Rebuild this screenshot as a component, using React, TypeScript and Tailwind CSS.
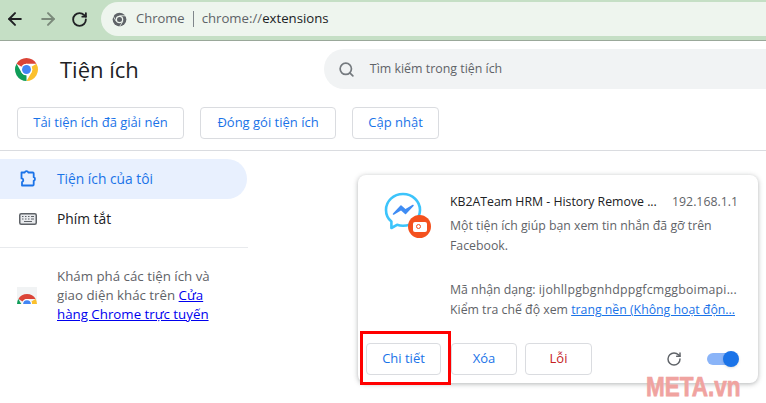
import React from 'react';
import { ArrowLeft, ArrowRight, RotateCw, Search } from 'lucide-react';

const ChromeLogo = ({ size }: { size: number }) => (
  <svg width={size} height={size} viewBox="2 2 44 44">
    <path d="M4.950 13A22 22 0 0 1 43.050 13H24A11 11 0 0 0 14.470 18.500z" fill="#db4437" />
    <path d="M43.050 13A22 22 0 0 1 24 46L33.530 29.500A11 11 0 0 0 33.530 18.500z" fill="#fbc02d" />
    <path d="M24 46A22 22 0 0 1 4.950 13L14.470 29.500A11 11 0 0 0 24 35z" fill="#0f9d58" />
    <circle cx="24" cy="24" r="11" fill="#fff" />
    <circle cx="24" cy="24" r="8.500" fill="#4285f4" />
  </svg>
);

const GrayChrome = () => (
  <svg width="15" height="15" viewBox="0 0 24 24" fill="none">
    <circle cx="12" cy="12" r="11" fill="#5f6368" />
    <circle cx="12" cy="12" r="6" fill="#eef5ee" />
    <circle cx="12" cy="12" r="4" fill="#5f6368" />
    <path d="M12 6h10.500M6.800 15 1.800 6.500M17.200 15 12 23.500" stroke="#eef5ee" strokeWidth="1.300" />
  </svg>
);

const PuzzleIcon = () => (
  <svg width="18" height="18" viewBox="0 0 18 18" fill="none" stroke="#1a73e8" strokeWidth="1.800" strokeLinejoin="round">
    <path d="M2.500 2.500h3.200a1.900 1.900 0 0 1 3.600 0h4.400a1 1 0 0 1 1 1v3.700a1.900 1.900 0 0 1 0 3.600v3.700a1 1 0 0 1-1 1H3v-3.500a1.900 1.900 0 0 0 0-3.600H2.500z" />
  </svg>
);

const KeyboardIcon = () => (
  <svg width="18" height="12" viewBox="0 0 18 12">
    <rect x="0.750" y="0.750" width="16.500" height="10.500" rx="1.500" fill="#e8eaed" stroke="#5f6368" strokeWidth="1.500" />
    <path d="M3 3.500h1.500M6 3.500h1.500M9 3.500h1.500M12 3.500h3M3 6h1.500M6 6h1.500M9 6h1.500M12 6h3M5 8.500h8" stroke="#5f6368" />
  </svg>
);

const StoreIcon = () => (
  <div className="w-5 h-[17px] bg-[#f1f3f4] flex justify-center items-end">
    <div className="w-5 h-[10px] overflow-hidden">
      <ChromeLogo size={20} />
    </div>
  </div>
);

const ExtensionIcon = () => (
  <div className="relative w-[47px] h-[46px]">
    <svg width="38" height="38" viewBox="0 0 38 38" fill="none">
      <path
        d="M19 2C9.500 2 2 9 2 18c0 4.700 2 8.800 5.400 11.600V36l5.600-3.200c1.900.6 3.900.9 6 .9 9.500 0 17-7 17-15.700S28.500 2 19 2z"
        stroke="#3cc4fb"
        strokeWidth="2.600"
        strokeLinejoin="round"
      />
      <path d="M9.500 22l7.500-8 4.500 4 7.500-4.500-7.500 8-4.500-4z" fill="#3f8cf4" stroke="#3f8cf4" strokeWidth="1.500" strokeLinejoin="round" />
    </svg>
    <div className="absolute right-0 bottom-0 w-[23px] h-[23px] rounded-full bg-[#f4511e] flex items-center justify-center">
      <div className="w-[14px] h-[10px] rounded-[2px] bg-white flex items-center pl-[3px]">
        <div className="w-[5px] h-[5px] rounded-full border border-[#f4511e]" />
      </div>
    </div>
  </div>
);

const OutlineButton = ({ label, className, red }: { label: string; className: string; red?: boolean }) => (
  <button
    className={`h-8 rounded border border-[#dadce0] bg-white text-[13px] font-medium flex items-center justify-center ${
      red ? 'text-[#c5221f]' : 'text-[#1a73e8]'
    } ${className}`}
  >
    {label}
  </button>
);

export default function App() {
  return (
    <div
      className="relative w-[766px] h-[403px] overflow-hidden bg-white text-[#202124]"
      style={{ fontFamily: '"Open Sans", "Noto Sans", sans-serif' }}
    >
      {/* Browser toolbar */}
      <div className="h-[41px] bg-[#c5dfc5] border-b border-[#9aa89a] flex items-start pt-[2px]">
        <div className="w-[101px] h-[34px] flex items-center pl-[5px] gap-[13px] shrink-0">
          <ArrowLeft size={20} color="#202124" strokeWidth={2.400} />
          <ArrowRight size={20} color="#7b8a7b" strokeWidth={2.400} />
          <RotateCw size={17} color="#202124" strokeWidth={2.600} />
        </div>
        <div className="flex-1 h-[34px] -mr-5 bg-[#eef5ee] rounded-full flex items-center pl-[11px]">
          <GrayChrome />
          <span className="ml-[9px] text-[13px] text-[#5f6368]">Chrome</span>
          <span className="mx-[8px] w-px h-4 bg-[#80868b]" />
          <span className="text-[13.200px] text-[#5f6368]">
            chrome://<span className="text-[#202124]">extensions</span>
          </span>
        </div>
      </div>

      {/* Header */}
      <div className="h-10 mt-2 flex items-center pl-[15px]">
        <ChromeLogo size={23} />
        <h1 className="ml-[22px] text-[22px] font-normal">Tiện ích</h1>
        <div className="ml-[185px] flex-1 h-10 -mr-5 bg-[#f1f3f4] rounded-full flex items-center pl-[14px]">
          <Search size={17} color="#757a7f" strokeWidth={2.400} />
          <span className="ml-[15px] text-[12.400px] text-[#5f6368]">Tìm kiếm trong tiện ích</span>
        </div>
      </div>

      <div className="flex gap-4 pl-[17px] mt-[18px] h-[33px] pb-px">
        <OutlineButton label="Tải tiện ích đã giải nén" className="w-[167px]" />
        <OutlineButton label="Đóng gói tiện ích" className="w-[136px]" />
        <OutlineButton label="Cập nhật" className="w-[87px]" />
      </div>

      <div className="h-px bg-[#dadce0] mt-[10px]" />

      <div className="flex">
        {/* Sidebar */}
        <aside className="w-[248px] shrink-0 pt-2">
          <div className="h-10 w-[247px] bg-[#e8f0fe] rounded-r-full flex items-center pl-[19px] gap-5 text-[13.800px] font-medium text-[#1a73e8]">
            <PuzzleIcon />
            <span>Tiện ích của tôi</span>
          </div>
          <div className="h-10 flex items-center pl-[19px] gap-5 text-[13.800px] font-medium">
            <KeyboardIcon />
            <span>Phím tắt</span>
          </div>
          <div className="h-px bg-[#e8eaed] mt-2" />
          <div className="flex items-center pl-[17px] gap-5 pt-[19px] text-[13.300px] leading-[19px] text-[#5f6368]">
            <StoreIcon />
            <p className="w-[172px]">
              Khám phá các tiện ích và giao diện khác trên{' '}
              <a className="text-[#0000ee] underline">Cửa hàng Chrome trực tuyến</a>
            </p>
          </div>
        </aside>

        {/* Extension card */}
        <main className="pl-[110px] pt-6">
          <div className="w-[400px] h-[208px] rounded-lg bg-white shadow-[0_1px_5px_rgba(60,64,67,0.4)] flex flex-col">
            <div className="flex-1 flex pl-[26px] pr-5 pt-[17px]">
              <ExtensionIcon />
              <div className="ml-[19px] w-[288px] text-[12.300px] text-[#5f6368] whitespace-nowrap">
                <div className="flex justify-between leading-5">
                  <span className="text-[#202124]">KB2ATeam HRM - History Remove ...</span>
                  <span>192.168.1.1</span>
                </div>
                <p className="mt-1 leading-5 whitespace-normal">Một tiện ích giúp bạn xem tin nhắn đã gỡ trên Facebook.</p>
                <p className="mt-6 leading-5">
                  Mã nhận dạng: <span className="tracking-[0.22px]">ijohllpgbgnhdppgfcmggboimapi...</span>
                </p>
                <p className="leading-5">
                  Kiểm tra chế độ xem <a className="text-[#1a73e8] underline">trang nền (Không hoạt độn...</a>
                </p>
              </div>
            </div>
            <div className="h-[40px] flex items-start pl-2 pr-5">
              <OutlineButton label="Chi tiết" className="w-[75px]" />
              <OutlineButton label="Xóa" className="w-[66px] ml-[10px]" />
              <OutlineButton label="Lỗi" className="w-[67px] ml-2" red />
              <div className="ml-auto flex items-center gap-[25px] h-8">
                <RotateCw size={16} color="#5f6368" strokeWidth={2.200} />
                <div className="relative w-[31px] h-[12px] rounded-full bg-[#8ab4f8]">
                  <div className="absolute -right-px -top-[2px] w-4 h-4 rounded-full bg-[#1a73e8] shadow" />
                </div>
              </div>
            </div>
          </div>
        </main>
      </div>

      {/* Red highlight drawn over the screenshot */}
      <div className="absolute left-[360px] top-[331px] w-[91px] h-[54px] border-[3px] border-[#ff0000]" />

      {/* Watermark */}
      <div
        className="absolute left-[646px] top-[372px] origin-top scale-y-125 text-[#f0a3a0] text-[22.500px] font-bold leading-6 [-webkit-text-stroke:0.6px_#f0a3a0]"
        style={{ fontFamily: '"Liberation Sans", sans-serif' }}
      >
        META.vn
      </div>
    </div>
  );
}
